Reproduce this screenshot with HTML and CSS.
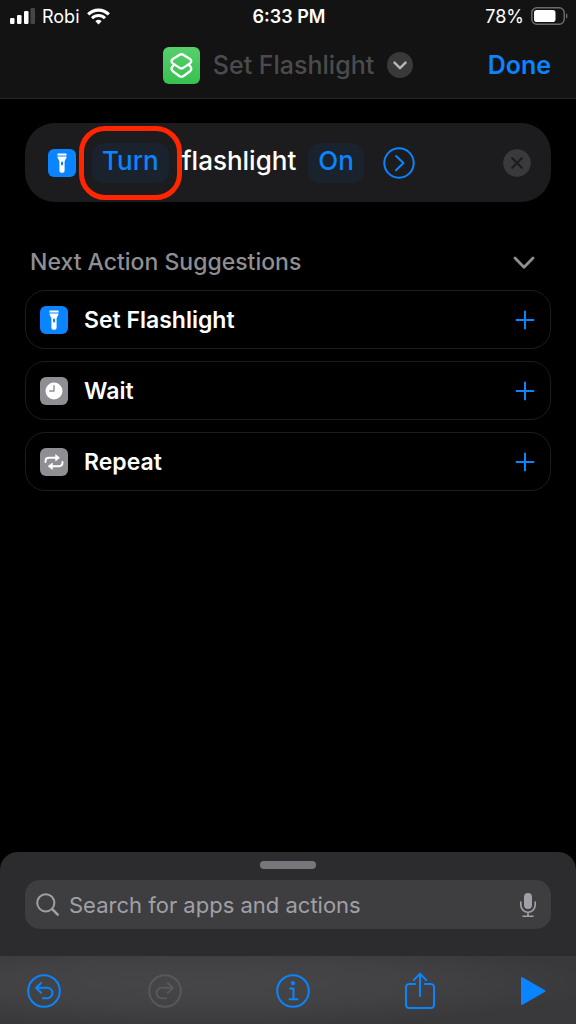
FILE: index.html
```html
<!DOCTYPE html>
<html lang="en">
<head>
<meta charset="utf-8">
<meta name="viewport" content="width=device-width, initial-scale=1">
<title>Set Flashlight</title>
<link rel="stylesheet" href="styles.css">
</head>
<body>
<svg class="sprite" aria-hidden="true">
  <symbol id="flashlight" viewBox="0 0 28 28">
    <path fill="#fff" d="M10 4.6h8q.6 0 .6.6v1.2H9.400V5.200q0-.6.6-.6zM9.400 7.400h9.200c0 2.500-2 3.200-2 5.400v9q0 2-2 2h-1.200q-2 0-2-2v-9c0-2.200-2-2.900-2-5.400z"/>
    <rect x="13" y="12.600" width="2" height="4" rx="1" fill="#0a84ff"/>
  </symbol>
  <symbol id="plus" viewBox="0 0 20 20">
    <path d="M10 .8v18.400M.8 10h18.400" fill="none" stroke="currentColor" stroke-width="2"/>
  </symbol>
</svg>

<header class="header">
  <div class="status">
    <div class="status-left">
      <svg width="25" height="16" viewBox="0 0 25 16" aria-hidden="true">
        <rect x="0" y="10" width="4.500" height="6" rx="1.200" fill="#fff"/>
        <rect x="7" y="7" width="4.500" height="9" rx="1.200" fill="#fff"/>
        <rect x="14" y="3" width="4.500" height="13" rx="1.200" fill="#fff"/>
        <rect x="20.500" y="0" width="4.500" height="16" rx="1.200" fill="#454547"/>
      </svg>
      <span>Robi</span>
      <svg width="23" height="17" viewBox="0 0 23 17" fill="none" stroke="#fff" aria-hidden="true">
        <path d="M1.200 6.300a14.600 14.600 0 0 1 20.600 0" stroke-width="3.200"/>
        <path d="M5 10.200a9.200 9.200 0 0 1 13 0" stroke-width="3"/>
        <path d="M11.500 16.500 8.400 13.200a4.500 4.500 0 0 1 6.200 0z" fill="#fff" stroke="none"/>
      </svg>
    </div>
    <div class="status-time">6:33 PM</div>
    <div class="status-right">
      <span>78%</span>
      <svg width="37" height="18" viewBox="0 0 37 18" aria-hidden="true">
        <rect x=".8" y=".8" width="32.400" height="16.400" rx="5" fill="none" stroke="#6a6a6c" stroke-width="1.500"/>
        <rect x="3" y="3" width="21.500" height="12" rx="2.800" fill="#fff"/>
        <path d="M35 6v6q1.500-.8 1.500-3t-1.500-3z" fill="#6a6a6c"/>
      </svg>
    </div>
  </div>
  <div class="navbar">
    <button class="title" type="button">
      <svg class="app-icon" viewBox="0 0 37 37" aria-hidden="true">
        <defs><linearGradient id="green" x2="0" y2="1"><stop stop-color="#57cf6d"/><stop offset="1" stop-color="#36c24f"/></linearGradient></defs>
        <rect width="37" height="37" rx="6" fill="url(#green)"/>
        <g fill="none" stroke="#fff" stroke-width="2.300" stroke-linejoin="round" stroke-linecap="round">
          <path d="M16.600 7.700q1.800-.9 3.600 0l6.800 4.300q2.600 2.200 0 4.400l-6.800 4.500q-1.800.9-3.600 0l-6.800-4.500q-2.600-2.200 0-4.400z"/>
          <path d="M11.200 17.400 9.800 19.200q-2.600 2.500 0 5l6.800 5q1.800 1 3.600 0l6.800-5q2.600-2.500 0-5l-1.400-1.800"/>
        </g>
      </svg>
      <span class="title-text">Set Flashlight</span>
      <svg class="title-chevron" viewBox="0 0 26 26" aria-hidden="true">
        <circle cx="13" cy="13" r="13" fill="#39393c"/>
        <path d="m7.500 10.600 5.500 5.600 5.500-5.600" fill="none" stroke="#b4b4b9" stroke-width="2.500" stroke-linecap="round" stroke-linejoin="round"/>
      </svg>
    </button>
    <button class="done" type="button">Done</button>
  </div>
</header>

<main class="main">
  <section class="action">
    <svg class="tile tile-blue" aria-hidden="true"><use href="#flashlight"/></svg>
    <span class="highlight"><button class="token" type="button">Turn</button></span>
    <span class="action-text">flashlight</span>
    <button class="token" type="button">On</button>
    <button class="expand" type="button" aria-label="Show more">
      <svg viewBox="0 0 32 32" width="32" height="32" fill="none" stroke="currentColor" stroke-width="2" stroke-linecap="round" stroke-linejoin="round">
        <circle cx="16" cy="16" r="14.700"/><path d="m13 9 7.500 7L13 23.300"/>
      </svg>
    </button>
    <button class="remove" type="button" aria-label="Remove action">
      <svg viewBox="0 0 28 28" width="28" height="28">
        <circle cx="14" cy="14" r="13.800" fill="#3a3a3c"/>
        <path d="m9.200 9.200 9.600 9.600M18.800 9.200l-9.600 9.600" stroke="#1c1c1e" stroke-width="2.200" stroke-linecap="round"/>
      </svg>
    </button>
  </section>

  <section class="suggestions">
    <button class="section-head" type="button">
      <span>Next Action Suggestions</span>
      <svg width="22" height="14" viewBox="0 0 22 14" aria-hidden="true">
        <path d="m2 3 9 9.200L20 3" fill="none" stroke="#8e8e93" stroke-width="2.800" stroke-linecap="round" stroke-linejoin="round"/>
      </svg>
    </button>
    <ul class="list">
      <li><button class="row" type="button">
        <svg class="tile tile-blue" aria-hidden="true"><use href="#flashlight"/></svg>
        <span class="row-label">Set Flashlight</span>
        <svg class="plus" aria-hidden="true"><use href="#plus"/></svg>
      </button></li>
      <li><button class="row" type="button">
        <svg class="tile tile-gray" viewBox="0 0 28 28" aria-hidden="true">
          <circle cx="14" cy="14" r="8.500" fill="#fff"/>
          <path d="M14 8.800V14h-4.200" fill="none" stroke="#8e8e93" stroke-width="1.400" stroke-linecap="round" stroke-linejoin="round"/>
        </svg>
        <span class="row-label">Wait</span>
        <svg class="plus" aria-hidden="true"><use href="#plus"/></svg>
      </button></li>
      <li><button class="row" type="button">
        <svg class="tile tile-gray" viewBox="0 0 28 28" aria-hidden="true">
          <path d="M5.500 14v-.8q0-3.400 3.400-3.400H17M22.500 14v.8q0 3.400-3.400 3.400H11" fill="none" stroke="#fff" stroke-width="1.900" stroke-linecap="round"/>
          <path d="M15.600 6.600v6.400l4-3.200zM12.400 15v6.400l-4.400-3.200z" fill="#fff" stroke="#fff" stroke-width=".6" stroke-linejoin="round"/>
        </svg>
        <span class="row-label">Repeat</span>
        <svg class="plus" aria-hidden="true"><use href="#plus"/></svg>
      </button></li>
    </ul>
  </section>
</main>

<footer class="sheet">
  <div class="sheet-body">
    <div class="handle"></div>
    <div class="search">
      <svg width="24" height="24" viewBox="0 0 24 24" fill="none" stroke="#a0a0a7" stroke-linecap="round" aria-hidden="true">
        <circle cx="9.800" cy="9.800" r="8.600" stroke-width="2"/><path d="m16.200 16.200 5.500 5.500" stroke-width="2.600"/>
      </svg>
      <input class="search-input" type="text" aria-label="Search for apps and actions" placeholder="Search for apps and actions">
      <button class="mic" type="button" aria-label="Dictate">
        <svg width="16" height="26" viewBox="0 0 16 26">
          <rect x="4" y="1" width="8" height="16" rx="4" fill="#a0a0a7"/>
          <path d="M.8 10v3a7.200 7.200 0 0 0 14.400 0v-3M8 20.500V24M3 24.200h10" fill="none" stroke="#a0a0a7" stroke-width="1.600" stroke-linecap="round"/>
        </svg>
      </button>
    </div>
  </div>
  <nav class="toolbar">
    <button class="tool" type="button" aria-label="Undo">
      <svg width="34" height="34" viewBox="0 0 34 34" fill="none" stroke="currentColor" stroke-width="2" stroke-linecap="round" stroke-linejoin="round">
        <circle cx="17" cy="17" r="15.800"/><path d="M14.200 9 9 13.800l5.200 5M9.500 13.800h10.700a5.200 5.200 0 0 1 0 10.400H16"/>
      </svg>
    </button>
    <button class="tool" type="button" aria-label="Redo" disabled>
      <svg width="34" height="34" viewBox="0 0 34 34" fill="none" stroke="currentColor" stroke-width="2" stroke-linecap="round" stroke-linejoin="round">
        <circle cx="17" cy="17" r="15.800"/><path d="m19.800 9 5.200 4.800-5.200 5M24.500 13.800H13.800a5.200 5.200 0 0 0 0 10.400H18"/>
      </svg>
    </button>
    <button class="tool" type="button" aria-label="Info">
      <svg width="34" height="34" viewBox="0 0 34 34" fill="none" stroke="currentColor" stroke-width="2" stroke-linecap="round" stroke-linejoin="round">
        <circle cx="17" cy="17" r="15.800"/><path d="M14 14.600h3.500V25M13.500 25.200h8"/><circle cx="17" cy="9.200" r="2.100" fill="currentColor" stroke="none"/>
      </svg>
    </button>
    <button class="tool" type="button" aria-label="Share">
      <svg width="30" height="38" viewBox="0 0 30 38" fill="none" stroke="currentColor" stroke-width="2" stroke-linecap="round" stroke-linejoin="round">
        <path d="M10.200 12H4.500Q1 12 1 15.500v17Q1 36 4.500 36h21q3.500 0 3.500-3.500v-17Q29 12 25.500 12h-5.700M15 24V2M8.800 8 15 1.600 21.200 8"/>
      </svg>
    </button>
    <button class="tool" type="button" aria-label="Run">
      <svg width="26" height="30" viewBox="0 0 26 30">
        <path d="M2 2v26l22.500-13z" fill="currentColor" stroke="currentColor" stroke-width="2" stroke-linejoin="round"/>
      </svg>
    </button>
  </nav>
</footer>
</body>
</html>
```

FILE: styles.css
```css
* {
  box-sizing: border-box;
}

body {
  margin: 0;
  min-height: 100vh;
  display: flex;
  flex-direction: column;
  background: #000;
  color: #fff;
  font-family: Inter, "Liberation Sans", sans-serif;
}

button,
input {
  margin: 0;
  padding: 0;
  border: 0;
  background: none;
  color: inherit;
  font: inherit;
}

svg {
  display: block;
  flex: none;
}

.sprite {
  position: absolute;
  width: 0;
  height: 0;
}

.header {
  background: #131313;
  border-bottom: 1px solid #272727;
}

.status {
  display: grid;
  grid-template-columns: 1fr auto 1fr;
  align-items: center;
  height: 32px;
  padding: 0 8px 0 10px;
  font-size: 18px;
}

.status-left,
.status-right {
  display: flex;
  align-items: center;
  gap: 7px;
}

.status-right {
  justify-content: flex-end;
}

.status-time {
  font-weight: 600;
}

.navbar {
  display: grid;
  grid-template-columns: 1fr auto 1fr;
  align-items: center;
  height: 66px;
  padding: 0 25px;
}

.title {
  grid-column: 2;
  display: flex;
  align-items: center;
  gap: 13px;
  color: #4b4b4d;
  font-size: 25px;
  font-weight: 500;
}

.app-icon {
  width: 37px;
  height: 37px;
}

.title-chevron {
  width: 26px;
  height: 26px;
}

.done {
  justify-self: end;
  color: #0a84ff;
  font-size: 25px;
  font-weight: 600;
}

.main {
  flex: 1;
  padding: 24px 25px;
}

.action {
  display: flex;
  align-items: center;
  height: 79px;
  padding: 0 20px 0 23px;
  border-radius: 30px;
  background: #1c1c1e;
  font-size: 26px;
  font-weight: 500;
}

.tile {
  width: 28px;
  height: 28px;
  border-radius: 6px;
}

.tile-blue {
  background: #0a84ff;
}

.tile-gray {
  background: #8e8e93;
}

.highlight {
  display: flex;
  margin-left: 3px;
  padding: 12px 8px;
  border: 5px solid #ff2600;
  border-radius: 26px;
}

.token {
  height: 40px;
  padding: 0 10px 4px;
  border-radius: 12px;
  background: #1a222d;
  color: #0a84ff;
}

.action-text {
  margin-right: 12px;
  padding-bottom: 4px;
}

.expand {
  margin-left: 19px;
  color: #0a84ff;
}

.remove {
  margin-left: auto;
}

.suggestions {
  margin-top: 40px;
}

.section-head {
  display: flex;
  align-items: center;
  justify-content: space-between;
  width: 100%;
  height: 40px;
  padding: 0 16px 0 5px;
  color: #8e8e93;
  font-size: 23px;
  font-weight: 500;
}

.list {
  display: grid;
  gap: 12px;
  margin: 8px 0 0;
  padding: 0;
  list-style: none;
}

.row {
  display: flex;
  align-items: center;
  gap: 16px;
  width: 100%;
  height: 59px;
  padding: 0 15px 0 14px;
  border: 1px solid #1c1c1e;
  border-radius: 20px;
  font-size: 23px;
  font-weight: 600;
  text-align: left;
}

.row-label {
  flex: 1;
}

.plus {
  width: 20px;
  height: 20px;
  color: #0a84ff;
}

.sheet {
  border-radius: 18px 18px 0 0;
  background: #2c2c2e;
}

.sheet-body {
  padding: 9px 25px 27px;
}

.handle {
  width: 56px;
  height: 8px;
  margin: 0 auto 11px;
  border-radius: 4px;
  background: #77777b;
}

.search {
  display: flex;
  align-items: center;
  gap: 9px;
  height: 49px;
  padding: 0 15px 0 11px;
  border-radius: 15px;
  background: #3e3e40;
}

.search-input {
  flex: 1;
  min-width: 0;
  font-size: 22px;
}

.search-input::placeholder {
  color: #a0a0a7;
  opacity: 1;
}

.toolbar {
  display: grid;
  grid-template-columns: 121fr 127fr 129fr 115fr auto;
  align-items: center;
  height: 68px;
  padding: 1px 30px 0 27px;
  background: radial-gradient(ellipse at 36% 40%, #464648, #424244 40%, #39393b 75%);
}

.tool {
  justify-self: start;
  color: #0a84ff;
}

.tool:disabled {
  color: #58585a;
}
```
